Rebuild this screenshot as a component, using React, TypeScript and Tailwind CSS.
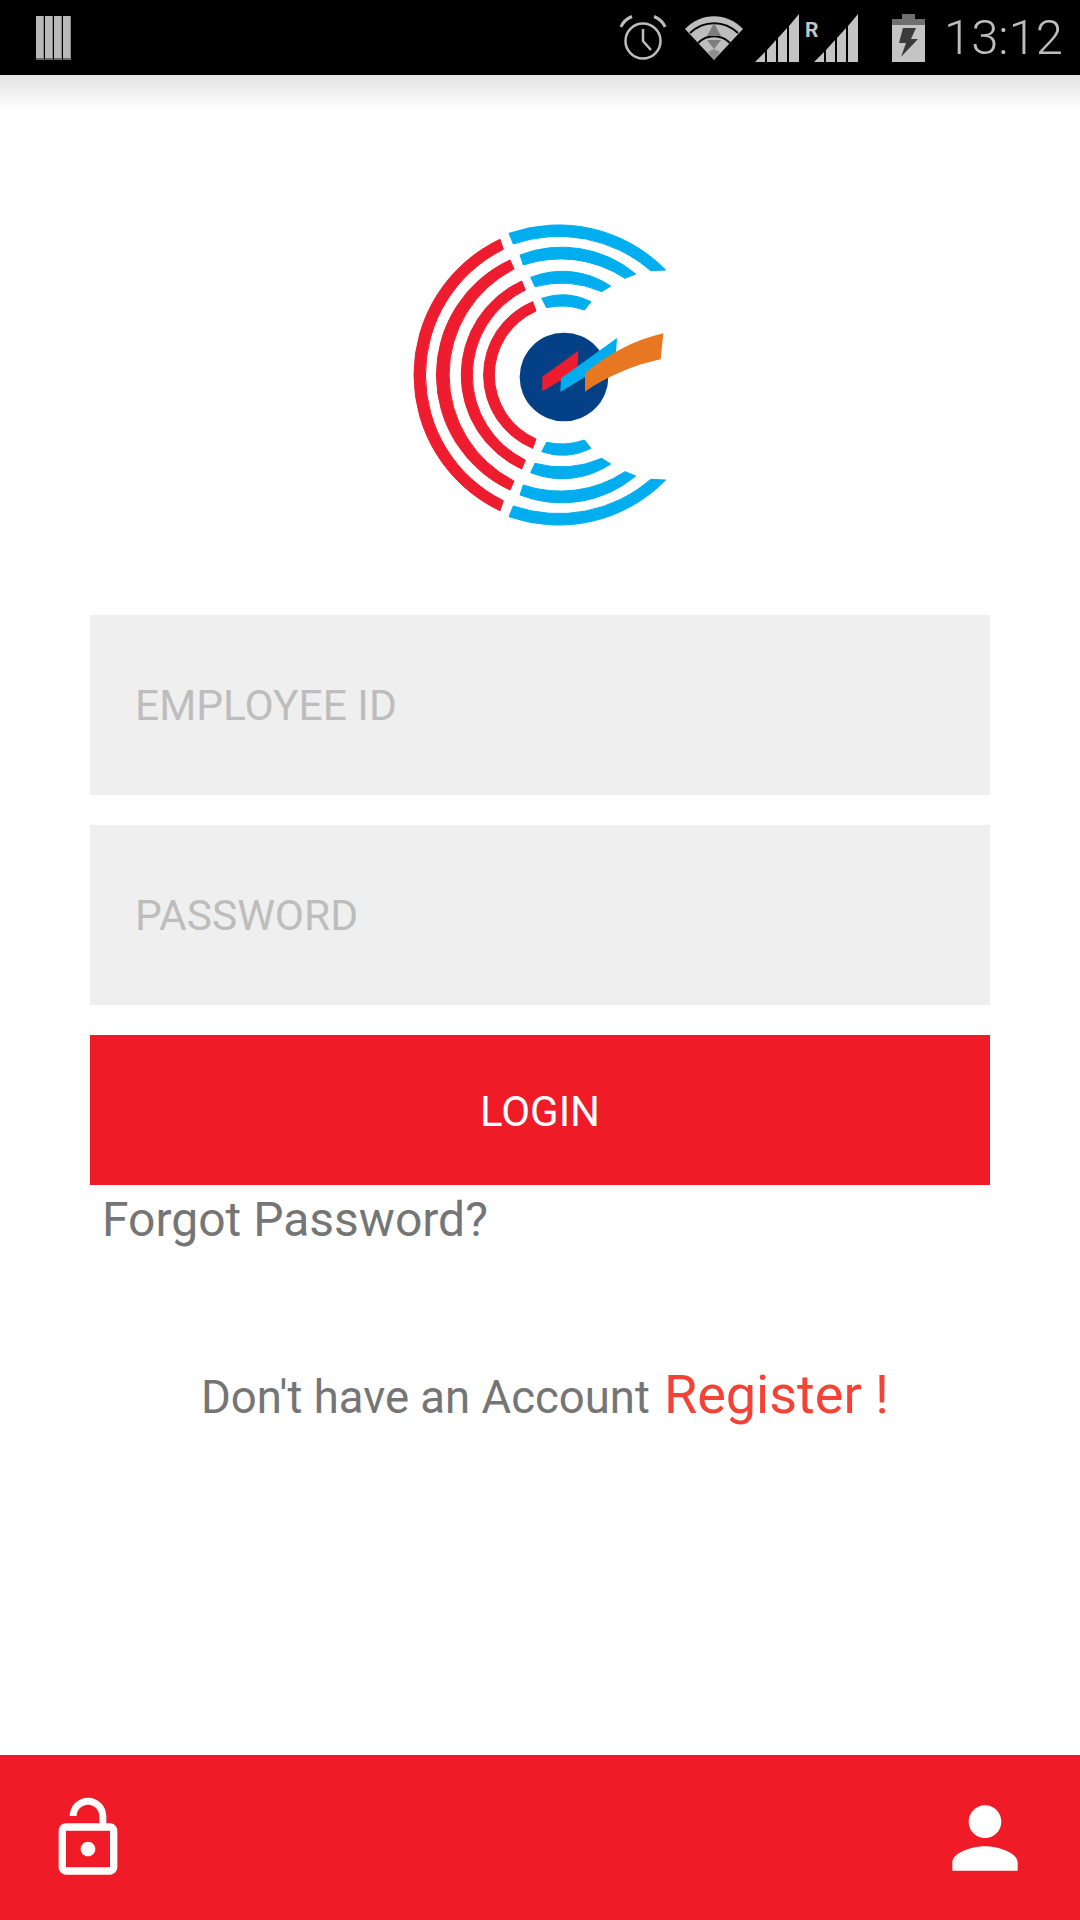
import { MdLockOpen, MdPerson } from 'react-icons/md';

function StatusIcons() {
  return (
    <div className="flex items-center">
      {/* alarm */}
      <svg width="48" height="46" viewBox="0 0 48 46" className="mr-[18px]" fill="none" stroke="#bdbdbd">
        <circle cx="24" cy="26" r="17.5" strokeWidth="2.5" />
        <path d="M24 14v12l8 9" strokeWidth="2.5" />
        <path d="M2 12C4 7 8 3.500 13 1.500M46 12C44 7 40 3.500 35 1.500" strokeWidth="3" />
      </svg>
      {/* wifi */}
      <svg width="58" height="44" viewBox="0 0 58 44" className="mr-[12px]">
        <path d="M0 13C16 -4 42 -4 58 13L29 44Z" fill="#bdbdbd" />
        <path d="M5 17C19 4 39 4 53 17M13 27C22 18 36 18 45 27" fill="none" stroke="#000" strokeWidth="2" />
        <path d="M29 7L36 20H22ZM22 24H36L29 33Z" fill="#7d7d7d" />
        <path d="M29 33L35 36L29 44L23 36Z" fill="#8f8f8f" />
      </svg>
      {/* signal with roaming R */}
      <svg width="104" height="48" viewBox="0 0 104 48">
        <path d="M0 48L10 38V48ZM12 36L21 26V48H12ZM23 24L32 14V48H23ZM34 12L44 0V48H34Z" fill="#c4c4c4" />
        <path d="M59 48L69 38V48ZM71 36L80 26V48H71ZM82 24L91 14V48H82ZM93 12L103 0V48H93Z" fill="#c4c4c4" />
        <text x="50" y="23" fontSize="21" fontWeight="700" fill="#c4c4c4" fontFamily="Roboto, sans-serif">R</text>
      </svg>
      {/* battery charging */}
      <svg width="33" height="48" viewBox="0 0 33 48" className="ml-[33px]">
        <path d="M10 0H23V5H33V48H0V5H10Z" fill="#6f6f6f" />
        <path d="M0 11H33V48H0Z" fill="#c4c4c4" />
        <path d="M11 14H24L19 25H26L9 43L14 29H7Z" fill="#3a3a3a" />
      </svg>
      <span className="ml-[19px] font-['Roboto',sans-serif] font-light text-[49px] leading-none text-[#bdbdbd]">13:12</span>
    </div>
  );
}

function Logo() {
  return (
    <svg width="300" height="340" viewBox="0 0 900 1020">
      <g fill="#ed1c2e" stroke="#ed1c2e" strokeWidth="3">
        <path d="M330 118A450 450 0 0 0 330 932L340 902A421 421 0 0 1 340 148Z" />
        <path d="M360 180A380 380 0 0 0 360 870L372 843A357 357 0 0 1 372 207Z" />
        <path d="M395 243A310 310 0 0 0 395 807L406 780A284 284 0 0 1 406 270Z" />
        <path d="M428 305A238 238 0 0 0 428 745L438 717A210 210 0 0 1 438 333Z" />
      </g>
      <g fill="#00aeef" stroke="#00aeef" strokeWidth="3">
        <path d="M357 100A450 450 0 0 1 827 210L782 212A420 420 0 0 0 370 132Z" />
        <path d="M390 165A345 345 0 0 1 737 222L705 235A350 350 0 0 0 400 195Z" />
        <path d="M422 232A260 260 0 0 1 662 258L635 275A302 302 0 0 0 435 260Z" />
        <path d="M455 295A190 190 0 0 1 603 305L583 330A204 204 0 0 0 470 323Z" />
        <path d="M357 950A450 450 0 0 0 827 840L782 838A420 420 0 0 1 370 918Z" />
        <path d="M390 885A345 345 0 0 0 737 828L705 815A350 350 0 0 1 400 855Z" />
        <path d="M422 818A260 260 0 0 0 662 792L635 775A302 302 0 0 1 435 790Z" />
        <path d="M455 755A190 190 0 0 0 603 745L583 720A204 204 0 0 1 470 727Z" />
      </g>
      <circle cx="522" cy="531" r="133" fill="#044086" />
      <path d="M457 530L565 452L562 512L457 574Z" fill="#ed1c2e" />
      <path d="M513 535L681 414L677 474L511 576Z" fill="#00aeef" />
      <path d="M585 520C650 465 730 420 820 400L812 478C730 495 650 530 585 575Z" fill="#e87722" />
    </svg>
  );
}

function Field({ label }: { label: string }) {
  return (
    <div className="h-[180px] bg-[#efefef] flex items-center pl-[45px] pt-[3px]">
      <span className="text-[42.500px] leading-none text-[#bdbdbd]">{label}</span>
    </div>
  );
}

function NotifBar() {
  return <div className="w-[8px] bg-[#b9b9b9] border-r border-b-2 border-r-[#8a8a8a] border-b-[#6a6a6a]" />;
}

export default function App() {
  return (
    <div className="relative w-[1080px] h-[1920px] bg-white flex flex-col font-['Roboto',sans-serif] overflow-hidden">
      <div className="h-[75px] bg-black flex items-center justify-between pl-[36px] pr-[17px] shrink-0">
        <div className="flex gap-[1px] h-[44px]">
          <NotifBar />
          <NotifBar />
          <NotifBar />
          <NotifBar />
        </div>
        <StatusIcons />
      </div>
      <div className="absolute left-0 right-0 top-[75px] h-[36px] bg-gradient-to-b from-[#e4e4e4] to-white" />

      <div className="relative flex-1 flex flex-col">
        <div className="flex justify-center pt-[125px]">
          <Logo />
        </div>
        <div className="mt-[75px] mx-[90px] flex flex-col gap-[30px]">
          <Field label="EMPLOYEE ID" />
          <Field label="PASSWORD" />
          <div className="h-[150px] bg-[#ef1c27] flex items-center justify-center pt-[3px]">
            <span className="text-[42px] leading-none text-white">LOGIN</span>
          </div>
        </div>
        <div className="ml-[102px] mt-[8px] text-[48px] leading-[54px] text-[#757575]">Forgot Password?</div>
        <div className="mt-[116px] pl-[10px] flex items-baseline justify-center text-[#757575] text-[45.500px] leading-[64px]">
          <span>Don't have an Account</span>
          <span className="ml-[14px] text-[54px] text-[#f44336]">Register !</span>
        </div>
      </div>

      <div className="h-[165px] bg-[#ef1c27] flex items-center justify-between pl-[44px] pr-[46px] shrink-0 text-white">
        <MdLockOpen size={88} />
        <MdPerson size={98} />
      </div>
    </div>
  );
}
